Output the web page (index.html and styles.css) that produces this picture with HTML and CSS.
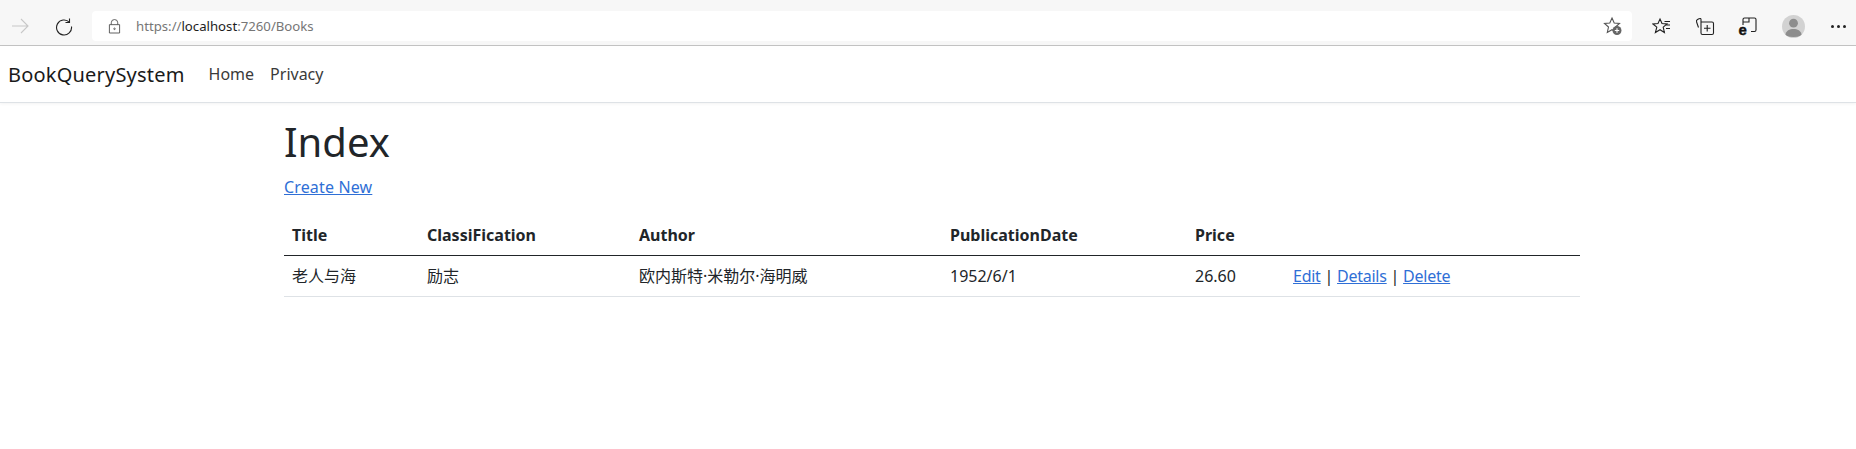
FILE: index.html
```html
<!DOCTYPE html>
<html lang="en">
<head>
    <meta charset="UTF-8">
    <title>Index - BookQuerySystem</title>
    <link rel="stylesheet" href="styles.css">
</head>
<body>
    <div class="browser-bar">
        <svg class="icon icon-forward" viewBox="0 0 20 20"><path d="M2 10H18M11 3L18 10L11 17"/></svg>
        <svg class="icon icon-reload" viewBox="0 0 20 20"><path d="M15.5 2.5V6.5H11.5M15.5 6.3A7.5 7.5 0 1 0 17.5 10.5"/></svg>
        <div class="address">
            <svg class="icon-lock" viewBox="0 0 14 16"><path d="M3.5 6V4A3.5 3.5 0 0 1 10.5 4V6M1.5 6H12.5V15H1.5Z"/><circle cx="7" cy="10.5" r="0.8"/></svg>
            <span class="url">https://<b>localhost</b>:7260/Books</span>
            <svg class="icon icon-fav-add" viewBox="0 0 20 20"><path d="M9 2L11.2 7L16.5 7.5L12.5 11L13.7 16.5L9 13.7L4.3 16.5L5.5 11L1.5 7.5L6.8 7Z"/><circle class="fill" cx="14" cy="14.5" r="4.5"/><path class="plus" d="M11.8 14.5H16.2M14 12.3V16.7"/></svg>
        </div>
        <div class="tools">
            <svg class="icon" viewBox="0 0 20 20"><path d="M8 3L10 7.5L15 8L11.2 11.2L12.4 16.5L8 13.7L3.4 16.5L4.8 11.2L1 8L6 7.5ZM12.5 5.5H18M14 9H18M14 12.5H18"/></svg>
            <svg class="icon" viewBox="0 0 20 20"><path d="M6 5.5V3.5Q6 2 4 2.8L2.5 3.5Q1 4.3 1.6 6L3.5 11.5M6 6H17Q18.5 6 18.5 7.5V17Q18.5 18.5 17 18.5H7.5Q6 18.5 6 17ZM12.2 9V15.5M9 12.3H15.5"/></svg>
            <svg class="icon" viewBox="0 0 20 20"><path d="M5 9V3.5Q5 2 6.5 2H16.5Q18 2 18 3.5V14Q18 15.5 16.5 15.5H13M5 6H11V2"/><text class="ie" x="0.5" y="18.5">e</text></svg>
            <div class="avatar"><svg viewBox="0 0 24 24"><circle cx="12" cy="8.5" r="4.6"/><path d="M3.5 21C4 16 8 14.5 12 14.5S20 16 20.5 21Q12 25 3.5 21Z"/></svg></div>
            <span class="more"><i></i><i></i><i></i></span>
        </div>
    </div>

    <nav class="navbar">
        <a class="brand" href="#">BookQuerySystem</a>
        <a class="nav-link" href="#">Home</a>
        <a class="nav-link" href="#">Privacy</a>
    </nav>

    <main class="container">
        <h1>Index</h1>
        <p class="create"><a href="#">Create New</a></p>
        <table class="table">
            <colgroup>
                <col class="col-title">
                <col class="col-class">
                <col class="col-author">
                <col class="col-date">
                <col class="col-price">
                <col>
            </colgroup>
            <thead>
                <tr>
                    <th>Title</th>
                    <th>ClassiFication</th>
                    <th>Author</th>
                    <th>PublicationDate</th>
                    <th>Price</th>
                    <th></th>
                </tr>
            </thead>
            <tbody>
                <tr>
                    <td>老人与海</td>
                    <td>励志</td>
                    <td>欧内斯特·米勒尔·海明威</td>
                    <td>1952/6/1</td>
                    <td>26.60</td>
                    <td class="actions"><a href="#">Edit</a> | <a href="#">Details</a> | <a href="#">Delete</a></td>
                </tr>
            </tbody>
        </table>
    </main>
</body>
</html>
```

FILE: styles.css
```css
body {
    margin: 0;
    background: #fff;
    color: #212529;
    font-family: "Noto Sans", "Noto Sans CJK SC", sans-serif;
    font-size: 16px;
}
a {
    color: #2f6fd6;
}

/* browser chrome */
.browser-bar {
    display: flex;
    align-items: center;
    box-sizing: border-box;
    height: 46px;
    padding-top: 7px;
    background: #f7f7f7;
    border-bottom: 1px solid #c4c4c4;
}
.icon {
    width: 20px;
    height: 20px;
    fill: none;
    stroke: #222;
    stroke-width: 1.1;
    flex: none;
}
.icon-forward {
    margin-left: 10px;
    stroke: #c8c8c8;
}
.icon-reload {
    margin-left: 24px;
}
.address {
    display: flex;
    align-items: center;
    width: 1540px;
    height: 30px;
    margin-left: 18px;
    background: #fff;
    border-radius: 4px;
}
.icon-lock {
    width: 13px;
    height: 15px;
    margin-left: 16px;
    fill: none;
    stroke: #555;
    stroke-width: 1;
}
.url {
    margin-left: 15px;
    color: #767676;
    font-size: 13.2px;
}
.url b {
    color: #1c1c1c;
    font-weight: 400;
}
.icon-fav-add {
    margin-left: auto;
    margin-right: 9px;
    stroke: #555;
}
.icon-fav-add .fill {
    fill: #666;
    stroke: none;
}
.icon-fav-add .plus {
    stroke: #fff;
}
.tools {
    display: flex;
    align-items: center;
    gap: 24px;
    margin-left: 20px;
}
.tools .icon:nth-child(2) {
    margin-left: -1px;
}
.tools .icon:nth-child(3) {
    margin-left: -1px;
}
.ie {
    fill: #111;
    stroke: #111;
    stroke-width: .4;
    font-family: "Liberation Sans", sans-serif;
    font-size: 15px;
    font-weight: 700;
}
.avatar {
    width: 23px;
    height: 23px;
    border-radius: 50%;
    background: #d2d2d2;
    overflow: hidden;
}
.avatar svg {
    display: block;
    fill: #8d8d8d;
}
.more {
    display: flex;
    gap: 3px;
    margin-left: 2px;
}
.more i {
    width: 3px;
    height: 3px;
    border-radius: 50%;
    background: #222;
}

/* site nav */
.navbar {
    display: flex;
    align-items: center;
    height: 56px;
    padding-left: 8px;
    background: #fff;
    border-bottom: 1px solid #dee2e6;
    box-shadow: 0 1px 3px rgba(0, 0, 0, .05);
}
.navbar a {
    text-decoration: none;
}
.brand {
    margin-right: 16px;
    color: #1a1a1a;
    font-size: 20px;
    letter-spacing: .2px;
}
.nav-link {
    padding: 0 8px;
    color: #3a3a3a;
}

/* content */
.container {
    width: 1296px;
    margin: 0 auto;
    padding-left: 8px;
}
h1 {
    margin: 15px 0 9px;
    font-size: 40px;
    font-weight: 400;
    line-height: 48px;
}
.create {
    margin: 0 0 16px;
    line-height: 24px;
    letter-spacing: .15px;
}
.table {
    width: 100%;
    border-collapse: collapse;
    table-layout: fixed;
}
.col-title { width: 135px; }
.col-class { width: 212px; }
.col-author { width: 311px; }
.col-date { width: 245px; }
.col-price { width: 98px; }
th, td {
    padding: 8px;
    text-align: left;
    line-height: 24px;
}
th {
    font-weight: 700;
    border-bottom: 1px solid #212529;
}
td {
    border-bottom: 1px solid #dee2e6;
}
.actions {
    letter-spacing: -.25px;
}
```
